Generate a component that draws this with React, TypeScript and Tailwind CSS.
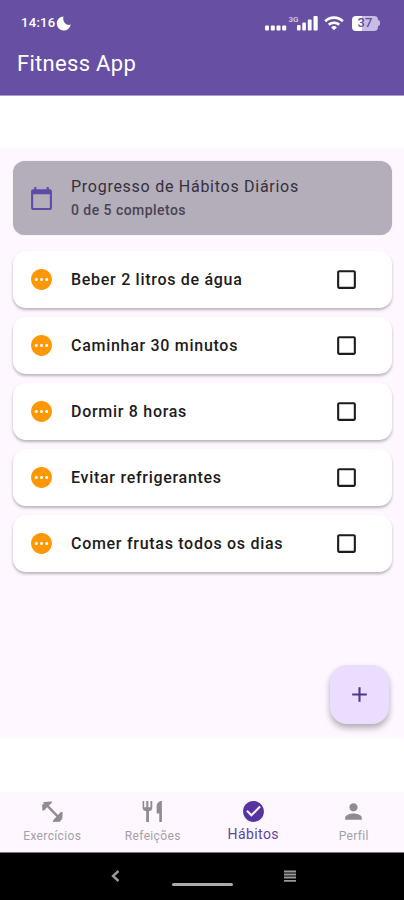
import React from 'react';
import {
  MdAdd,
  MdCalendarToday,
  MdCheckBoxOutlineBlank,
  MdCheckCircle,
  MdPending,
  MdPerson,
} from 'react-icons/md';

const habits = [
  'Beber 2 litros de água',
  'Caminhar 30 minutos',
  'Dormir 8 horas',
  'Evitar refrigerantes',
  'Comer frutas todos os dias',
];

function DumbbellIcon({ className }: { className?: string }) {
  return (
    <svg className={className} viewBox="0 0 24 24" fill="currentColor">
      <path d="M2 5.500 3.500 4.700 3.300 2.800 11.500 2.500 11.300 3.800 8.400 6.300 17.300 15.400 20 12.500 21.800 12.800 21.300 19.500 20 20.200 19.400 21.900 12.300 22 12.800 20.200 15.700 17 6.800 7.900 4 11 2.300 11Z" />
    </svg>
  );
}

function CutleryIcon({ className }: { className?: string }) {
  return (
    <svg className={className} viewBox="0 0 24 24" fill="currentColor">
      <path d="M2.500 2H4v6h2V2h2v6h2V2h1.800v6.500c0 2-1.300 3-3.200 3.300V22H5.900V11.800C4 11.500 2.500 10.500 2.500 8.500Z" />
      <path d="M21 2v20h-2.500v-8H16V7c0-3 2.500-5 5-5Z" />
    </svg>
  );
}

const tabs = [
  { label: 'Exercícios', icon: DumbbellIcon },
  { label: 'Refeições', icon: CutleryIcon },
  { label: 'Hábitos', icon: MdCheckCircle, active: true },
  { label: 'Perfil', icon: MdPerson },
];

function StatusBar() {
  return (
    <div className="flex h-[46px] items-center justify-between pl-[21px] pr-[24px]">
      <div className="flex items-center">
        <span className="text-[13px] font-medium tracking-[0.3px]">14:16</span>
        <svg className="ml-px h-[15px] w-[15px]" viewBox="0 0 15 15" fill="#fff">
          <path d="M7.500.5A7 7 0 1 0 14.700 8.500C11.500 10.200 6 6.500 7.500.5Z" />
        </svg>
      </div>
      <div className="flex items-center">
        <svg className="h-[16px] w-[54px]" viewBox="0 0 54 16" fill="#fff">
          <rect x="0" y="10.5" width="4" height="5" rx="1" />
          <rect x="5.8" y="10.5" width="4" height="5" rx="1" />
          <rect x="11.5" y="10.5" width="4" height="5" rx="1" />
          <rect x="17.2" y="10.5" width="4" height="5" rx="1" />
          <text x="23.5" y="7" fontSize="8" fontWeight="500" fillOpacity=".75">3G</text>
          <rect x="32" y="10" width="3.6" height="5.5" rx="1" />
          <rect x="37.3" y="7.5" width="3.6" height="8" rx="1" />
          <rect x="42.8" y="4.5" width="3.8" height="11" rx="1" />
          <rect x="48.5" y="1" width="4.2" height="14.5" rx="1" />
        </svg>
        <svg className="ml-[5px] mr-px h-[15px] w-[20px]" viewBox="0 0 20 15" fill="none" stroke="#fff" strokeWidth="2.6">
          <path d="M1.2 5.2a12.6 12.6 0 0 1 17.6 0" />
          <path d="M4.8 8.8a7.5 7.5 0 0 1 10.4 0" />
          <path d="M7.2 11.4a4 4 0 0 1 5.6 0L10 14.3Z" fill="#fff" stroke="none" />
        </svg>
        <div className="ml-[7px] flex items-center">
          <div className="flex h-[15px] w-[26px] items-center justify-center rounded-[4px] bg-linear-to-r from-white from-37% to-[#c8bce2] to-37% text-[13px] font-medium text-[#65509f]">
            37
          </div>
          <div className="h-[6px] w-[2px] rounded-r-full bg-[#c8bce2]" />
        </div>
      </div>
    </div>
  );
}

function HabitCard({ name }: { name: string }) {
  return (
    <div className="flex h-[57px] items-center rounded-[13px] bg-white pl-[16px] pr-[33px] shadow-[0_2px_3px_rgba(0,0,0,0.28)]">
      <MdPending className="size-[25px] text-[#ff9800]" />
      <span className="ml-[17px] flex-1 text-[16px] font-medium tracking-[0.71px] text-[#1d1b20]">{name}</span>
      <MdCheckBoxOutlineBlank className="size-[25px] text-[#1d1b20]" />
    </div>
  );
}

export default function App() {
  return (
    <div className="flex h-[900px] w-[404px] flex-col bg-white font-[Roboto,sans-serif]">
      <header className="h-[96px] border-b border-[#a99bca] bg-[#6750a4] text-white">
        <StatusBar />
        <h1 className="pl-[17px] pt-px text-[22px] leading-[34px] tracking-[0.3px]">Fitness App</h1>
      </header>

      <main className="relative mt-[52px] h-[590px] bg-[#fef7ff] pl-[13px] pr-[12px] pt-[13px]">
        <section className="flex h-[74px] items-center rounded-[12px] bg-[#b4adba] pl-[16px] shadow-[0_0_1px_rgba(180,173,186,0.8)]">
          <MdCalendarToday className="size-[25px] text-[#5f4aa8]" />
          <div className="ml-[17px]">
            <p className="text-[16px] leading-[24px] tracking-[0.73px] text-[#35313b]">Progresso de Hábitos Diários</p>
            <p className="text-[14px] font-medium leading-[22px] tracking-[0.45px] text-[#49454f]">0 de 5 completos</p>
          </div>
        </section>

        <div className="mt-[16px] flex flex-col gap-[9px]">
          {habits.map((name) => (
            <HabitCard key={name} name={name} />
          ))}
        </div>

        <button className="absolute bottom-[14px] right-[15px] flex size-[59px] items-center justify-center rounded-[17px] bg-[#eaddff] text-[#4f378b] shadow-[0_4px_6px_rgba(0,0,0,0.3)]">
          <MdAdd className="size-[25px]" />
        </button>
      </main>

      <nav className="mt-[54px] grid h-[60px] grid-cols-4 bg-[#fef7ff] pl-[2px]">
        {tabs.map(({ label, icon: Icon, active }) => (
          <a
            key={label}
            className={
              active
                ? 'flex flex-col items-center pt-[7px] text-[14px] leading-[20px] tracking-[0.4px] text-[#5d45a0]'
                : 'flex flex-col items-center pt-[7px] text-[12px] leading-[24px] tracking-[0.35px] text-[#a39fa6]'
            }
          >
            <Icon className={active ? 'size-[25px] text-[#5534a0]' : 'size-[25px] text-[#8f8b91]'} />
            {label}
          </a>
        ))}
      </nav>

      <footer className="flex h-[48px] items-center border-t border-[#777] bg-black">
        <svg className="-mt-px ml-[111px] h-[14px] w-[9px]" viewBox="0 0 9 14" fill="none" stroke="#999" strokeWidth="2.4">
          <path d="M7.5 2 2 7l5.500 5" />
        </svg>
        <div className="ml-[52px] mt-[15px] h-[3px] w-[61px] rounded-full bg-[#aaa]" />
        <svg className="-mt-px ml-[51px] h-[12px] w-[12px]" viewBox="0 0 12 12" stroke="#999" strokeWidth="1.8">
          <path d="M0 1.500h12M0 4.500h12M0 7.500h12M0 10.800h12" />
        </svg>
      </footer>
    </div>
  );
}
